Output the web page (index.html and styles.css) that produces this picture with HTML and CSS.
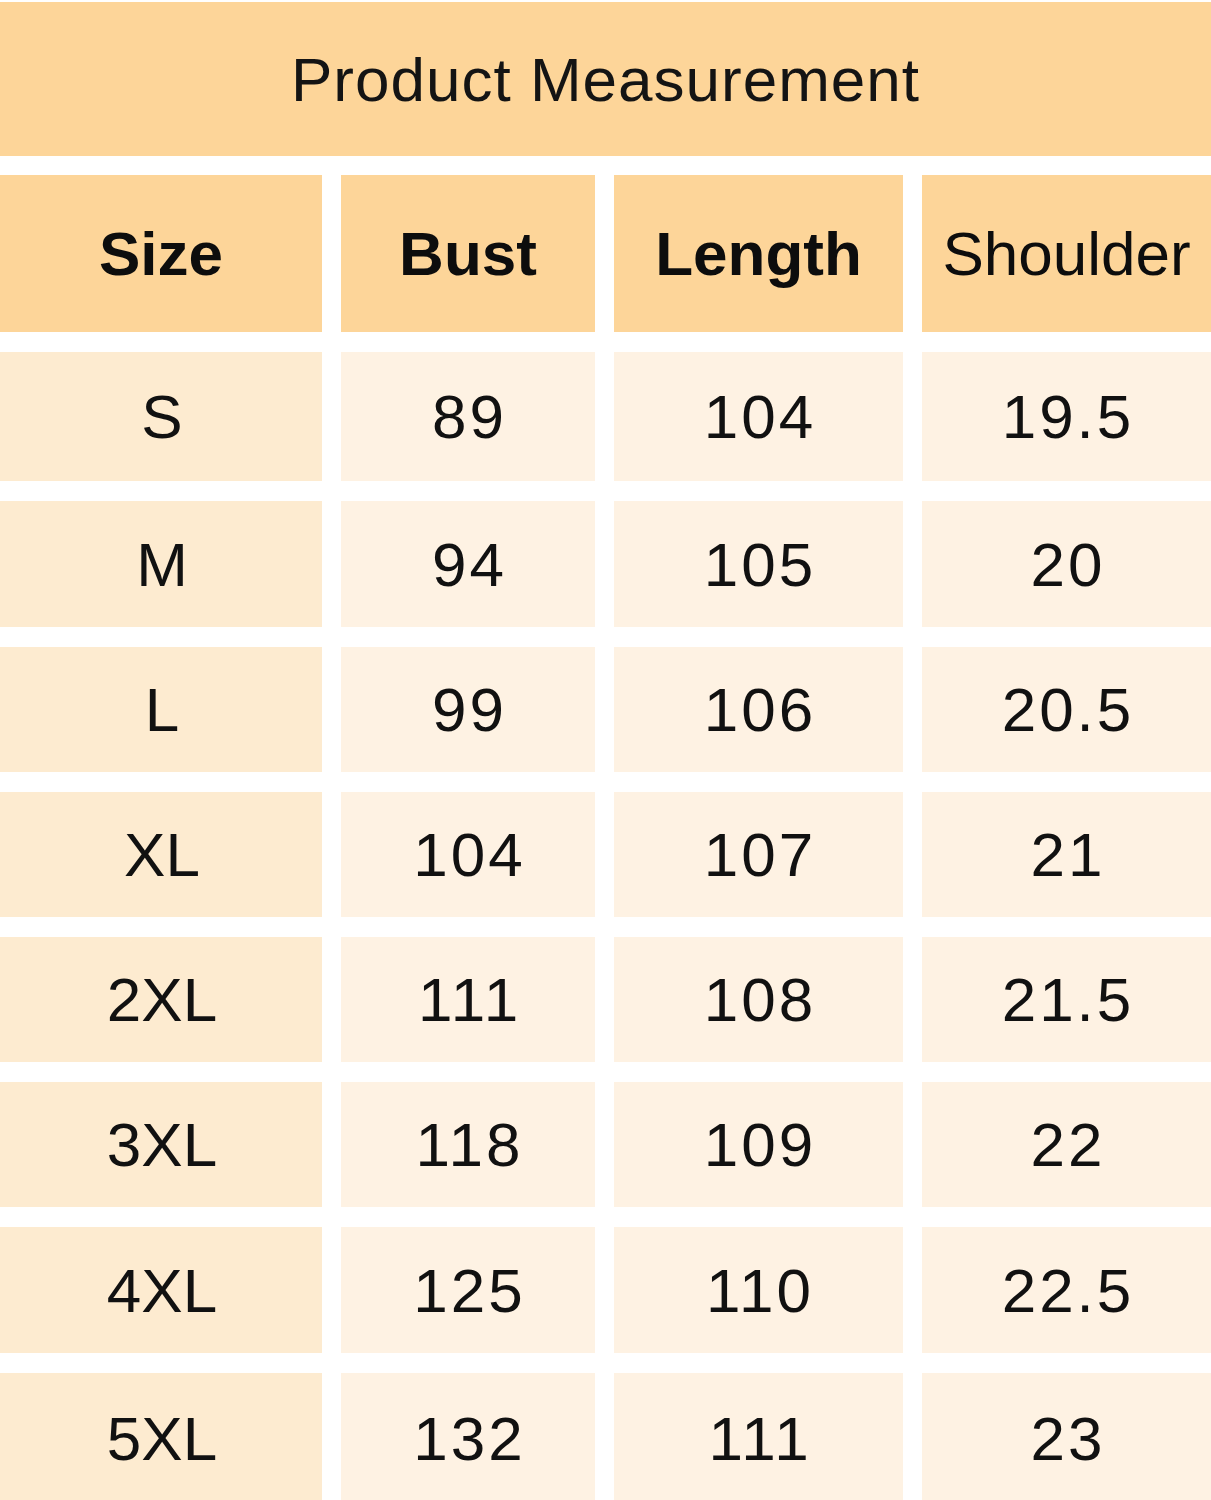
FILE: index.html
```html
<!DOCTYPE html>
<html lang="en">
<head>
<meta charset="utf-8">
<title>Product Measurement</title>
<link rel="stylesheet" href="styles.css">
</head>
<body>
<div class="page">
  <div class="title">Product Measurement</div>
  <div class="table">
    <div class="cell head">Size</div>
    <div class="cell head">Bust</div>
    <div class="cell head">Length</div>
    <div class="cell head light">Shoulder</div>

    <div class="cell size">S</div><div class="cell num">89</div><div class="cell num">104</div><div class="cell num">19.5</div>
    <div class="cell size">M</div><div class="cell num">94</div><div class="cell num">105</div><div class="cell num">20</div>
    <div class="cell size">L</div><div class="cell num">99</div><div class="cell num">106</div><div class="cell num">20.5</div>
    <div class="cell size">XL</div><div class="cell num">104</div><div class="cell num">107</div><div class="cell num">21</div>
    <div class="cell size">2XL</div><div class="cell num">111</div><div class="cell num">108</div><div class="cell num">21.5</div>
    <div class="cell size">3XL</div><div class="cell num">118</div><div class="cell num">109</div><div class="cell num">22</div>
    <div class="cell size">4XL</div><div class="cell num">125</div><div class="cell num">110</div><div class="cell num">22.5</div>
    <div class="cell size">5XL</div><div class="cell num">132</div><div class="cell num">111</div><div class="cell num">23</div>
  </div>
</div>
</body>
</html>
```
FILE: styles.css
```css
html, body {
  margin: 0;
  padding: 0;
  background: #ffffff;
}
body {
  font-family: "Liberation Sans", Arial, sans-serif;
  color: #111111;
}
.page {
  width: 1211px;
  padding-top: 2px;
}
.title {
  height: 154px;
  background: #fdd599;
  display: flex;
  align-items: center;
  justify-content: center;
  font-size: 62px;
  letter-spacing: 1px;
  color: #141414;
}
.table {
  margin-top: 19px;
  display: grid;
  grid-template-columns: 322px 254px 289px 289px;
  grid-template-rows: 157px 129px 126px 125px 125px 125px 125px 126px 130px;
  column-gap: 19px;
  row-gap: 20px;
}
.cell {
  display: flex;
  align-items: center;
  justify-content: center;
  font-size: 62px;
}
.head {
  background: #fdd599;
  font-weight: bold;
  color: #0d0d0d;
}
.head.light {
  font-weight: normal;
}
.size {
  background: #fdebd0;
  padding-left: 2px;
}
.num {
  background: #fef2e3;
  letter-spacing: 3px;
  padding-left: 3px;
}
```
